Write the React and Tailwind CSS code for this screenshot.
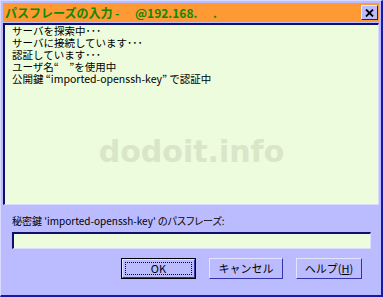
const JP = { fontFamily: '"Noto Sans CJK JP", "DejaVu Sans", sans-serif' }

const LINES = [
  'サーバを探索中･･･',
  'サーバに接続しています･･･',
  '認証しています･･･',
  'ユーザ名“　”を使用中',
  '公開鍵 “imported-openssh-key” で認証中',
]

function Button({ children, primary, className = '' }) {
  return (
    <div className={`h-[21px] ${primary ? 'border border-black' : ''} ${className}`}>
      <div className="h-full w-full border-t border-l border-[#e4e4ff] border-r border-b border-r-[#3333aa] border-b-[#3333aa] bg-[#bbbbff] flex items-center justify-center p-[2px]">
        <div
          className={`h-full w-full flex items-center justify-center text-[11px] leading-none text-black ${primary ? 'outline-1 outline-dotted outline-black -outline-offset-1' : ''}`}
        >
          {children}
        </div>
      </div>
    </div>
  )
}

export default function App() {
  return (
    <div
      className="w-[383px] h-[297px] bg-[#bbbbff] border-t border-l border-[#dadaff] border-r-2 border-b-2 border-r-[#1a1aa0] border-b-[#1a1aa0] p-[2px] flex flex-col"
      style={JP}
    >
      <div className="h-[19px] bg-[#ff9933] flex items-center pl-[2px] pr-[1px]">
        <div className="flex items-center text-[12px] font-bold text-[#118800] leading-none whitespace-pre">
          <span className="w-[130px]">パスフレーズの入力 -</span>
          <span className="w-[78px]">@192.168.</span>
          <span>.</span>
        </div>
        <div className="ml-auto w-[17px] h-[15px] bg-[#bbbbff] border-t border-l border-[#eeeeff] border-r border-b border-r-[#222266] border-b-[#222266] flex items-center justify-center">
          <svg width="9" height="8" viewBox="0 0 9 8">
            <path d="M1 0.5 L8 7.5 M8 0.5 L1 7.5" stroke="black" strokeWidth="1.8" />
          </svg>
        </div>
      </div>

      <div className="mt-[1px] h-[182px] bg-[#ecfcdc] border-t-2 border-l-2 border-[#10106a] border-r border-b border-r-[#dcdcff] border-b-[#dcdcff] relative">
        <div className="pl-[7px]">
          {LINES.map((l) => (
            <div key={l} className="h-[12px] text-[10.5px] leading-[12px] text-black whitespace-pre">
              {l}
            </div>
          ))}
        </div>
        <div
          className="absolute left-0 right-0 top-[112px] text-center text-[30px] font-bold leading-none text-[#d9e6c8]"
          style={{ fontFamily: '"DejaVu Sans", sans-serif' }}
        >
          dodoit.info
        </div>
      </div>

      <div className="pl-[9px] pr-[8px]">
        <div className="mt-[10px] text-[10px] leading-[12px] text-black whitespace-pre [font-feature-settings:'palt']">
          秘密鍵 'imported-openssh-key' のパスフレーズ:
        </div>
        <div className="mt-[5px] h-[17px] bg-[#ecfcdc] border-t-2 border-l-2 border-[#10106a] border-r border-b border-r-[#dcdcff] border-b-[#dcdcff]" />
        <div className="mt-[9px] flex pl-[109px] gap-[13px]">
          <Button primary className="w-[75px]">OK</Button>
          <Button className="w-[74px]">キャンセル</Button>
          <Button className="w-[66px]">
            <span>
              ヘルプ(<span className="underline">H</span>)
            </span>
          </Button>
        </div>
      </div>
    </div>
  )
}
